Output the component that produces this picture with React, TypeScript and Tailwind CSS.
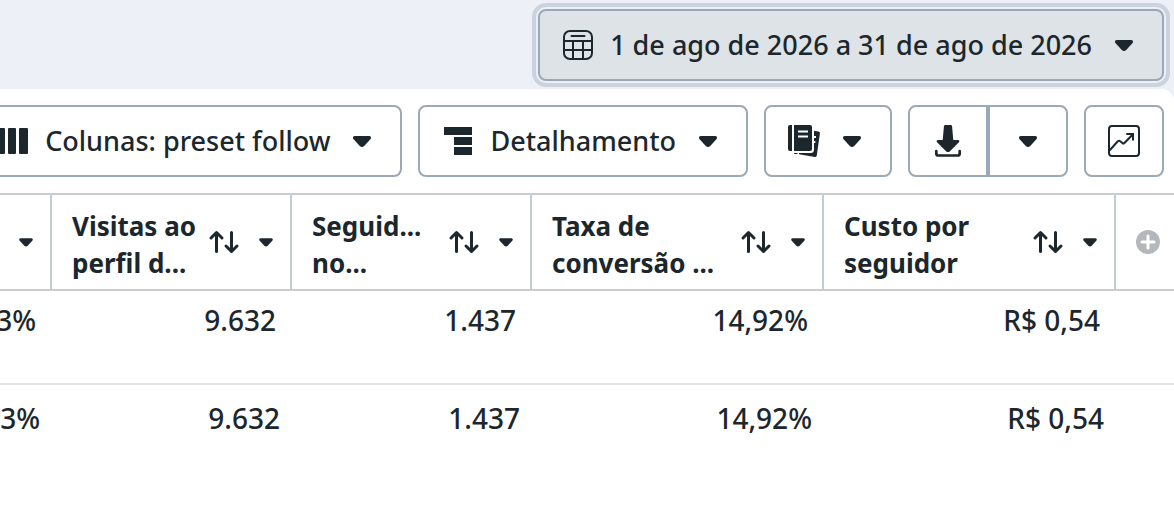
import React from 'react';
import clsx from 'clsx';

const Caret = ({ className = 'size-8' }: { className?: string }) => (
  <svg viewBox="0 0 32 32" fill="currentColor" className={clsx('shrink-0', className)} aria-hidden="true">
    <path d="M9 11h14c2 0 2.7 1.9 1.4 3.300l-6.200 6.600c-1.300 1.400-3.100 1.400-4.400 0l-6.200-6.600C6.300 12.900 7 11 9 11z" />
  </svg>
);

const CalendarIcon = () => (
  <svg viewBox="0 0 32 32" fill="none" stroke="currentColor" strokeWidth="2" className="size-8 shrink-0" aria-hidden="true">
    <rect x="2" y="2" width="28" height="28" rx="6" />
    <path d="M2 12h28M2 21h28M11 12v18M21 12v18" />
    <path d="M9.500 7h13" strokeLinecap="round" />
  </svg>
);

const ColumnsIcon = () => (
  <svg viewBox="0 0 32 32" fill="currentColor" className="size-8 shrink-0" aria-hidden="true">
    <rect x="0" y="3" width="8" height="26" rx="1" />
    <rect x="11" y="3" width="8" height="26" rx="1" />
    <rect x="22" y="3" width="9" height="26" rx="1" />
  </svg>
);

const BreakdownIcon = () => (
  <svg viewBox="0 0 32 32" fill="currentColor" className="size-8 shrink-0" aria-hidden="true">
    <path d="M2 2h28v8H2zM12 12h18v8H12zM12 22h18v8H12z" />
  </svg>
);

const ReportsIcon = () => (
  <svg viewBox="0 0 32 32" fill="currentColor" className="size-8 shrink-0" aria-hidden="true">
    <path d="M24 5.500l6.500 1.100a1.600 1.600 0 0 1 1.400 1.900L28.800 30.500a1.600 1.600 0 0 1-1.900 1.400L11 29.300V24z" />
    <path d="M0 0h26v24.500a3.500 3.500 0 0 1-3.500 3.500H0z" fill="#fff" />
    <path d="M25 12h3M25 17h2.300" stroke="#fff" strokeWidth="2" />
    <path d="M6 28.500h3.500" stroke="currentColor" strokeWidth="1" />
    <path d="M2 0h2v26H2a2 2 0 0 1-2-2V2a2 2 0 0 1 2-2z" />
    <path d="M6 0h16a2 2 0 0 1 2 2v22a2 2 0 0 1-2 2H6z" />
    <path d="M10 6.500h10M10 11.500h10" stroke="#fff" strokeWidth="2" />
  </svg>
);

const DownloadIcon = () => (
  <svg viewBox="0 0 32 32" fill="currentColor" className="size-8 shrink-0" aria-hidden="true">
    <path d="M13.500 0h5c1 0 1.500.5 1.600 1.500L21.300 15H26c1.400 0 1.800 1.200.9 2.200l-9.200 9.200c-1 .9-2.400.9-3.400 0l-9.200-9.200C4.200 16.200 4.600 15 6 15h4.700l1.200-13.500C12 .5 12.500 0 13.500 0z" />
    <path d="M4.300 26.200v2.300a2 2 0 0 0 2 2h19.400a2 2 0 0 0 2-2v-2.300" fill="none" stroke="currentColor" strokeWidth="2.700" strokeLinecap="round" />
  </svg>
);

const ChartIcon = () => (
  <svg viewBox="0 0 32 32" fill="none" stroke="currentColor" strokeWidth="2" className="size-8 shrink-0" aria-hidden="true">
    <rect x="1" y="1" width="30" height="30" rx="3" />
    <path d="M1.500 25.500L9.800 16.300a1.800 1.800 0 0 1 2.400-.1l2.200 1.900a1.500 1.500 0 0 0 2-.1L25 9.300M18.300 9H25v6.500" />
  </svg>
);

const SortIcon = () => (
  <svg viewBox="0 0 32 32" fill="none" stroke="currentColor" strokeWidth="3" strokeLinecap="round" strokeLinejoin="round" className="size-8 shrink-0" aria-hidden="true">
    <path d="M8.500 25.500v-19M3 12l5.500-5.500L14 12" />
    <path d="M23.500 6.500v19M18 20l5.500 5.500L29 20" />
  </svg>
);

const AddIcon = () => (
  <svg viewBox="0 0 24 24" className="size-6" aria-hidden="true">
    <circle cx="12" cy="12" r="12" fill="#b4b8bd" />
    <path d="M12 6v12M6 12h12" stroke="#fff" strokeWidth="3" strokeLinecap="round" />
  </svg>
);

const ToolbarButton = ({ className, ...props }: React.ButtonHTMLAttributes<HTMLButtonElement>) => (
  <button
    type="button"
    className={clsx(
      'flex h-18 shrink-0 items-center gap-4 whitespace-nowrap border-2 border-[#9ba8b5] px-[22px]',
      className
    )}
    {...props}
  />
);

const columns = [
  { lines: ['Visitas ao', 'perfil d...'] },
  { lines: ['Seguid...', 'no...'] },
  { lines: ['Taxa de', 'conversão ...'] },
  { lines: ['Custo por', 'seguidor'] },
];

const values = ['3%', '9.632', '1.437', '14,92%', 'R$ 0,54'];

const ValueCell = ({ value, className }: { value: string; className: string }) => (
  <td className="p-0 align-top">
    <div className={clsx('flex justify-end overflow-hidden whitespace-nowrap', className)}>{value}</div>
  </td>
);

const MetricsTable = () => (
  <table className="w-full table-fixed border-separate border-spacing-0">
    <colgroup>
      <col className="w-[52px]" />
      <col className="w-[240px]" />
      <col className="w-[240px]" />
      <col className="w-[292px]" />
      <col className="w-[292px]" />
      <col />
    </colgroup>
    <thead>
      <tr className="[&>th]:h-[98px] [&>th]:border-y-2 [&>th]:border-y-[#cccccc] [&>th]:p-0">
        <th className="border-r-2 border-r-[#c3ccd4]">
          <button type="button" aria-label="Opções da coluna" className="flex w-full justify-end pr-3">
            <Caret className="size-6" />
          </button>
        </th>
        {columns.map(({ lines }) => (
          <th key={lines[0]} scope="col" className="border-r-2 border-r-[#c3ccd4]">
            <div className="flex items-center pr-3 pl-5">
              <span className="flex-1 whitespace-nowrap pt-1.5 text-left text-[26px] leading-[37px] font-bold">
                {lines[0]}
                <br />
                {lines[1]}
              </span>
              <button type="button" aria-label="Ordenar">
                <SortIcon />
              </button>
              <button type="button" aria-label="Opções da coluna" className="ml-3.5">
                <Caret className="size-6" />
              </button>
            </div>
          </th>
        ))}
        <th>
          <button type="button" aria-label="Adicionar coluna" className="flex pl-5">
            <AddIcon />
          </button>
        </th>
      </tr>
    </thead>
    <tbody className="text-[28px] leading-[42px] font-medium">
      <tr className="[&>td]:h-[94px] [&>td]:border-b-2 [&>td]:border-[#e1e3e4]">
        {values.map((value) => (
          <ValueCell key={value} value={value} className="pt-2 pr-4" />
        ))}
        <td />
      </tr>
      <tr>
        {values.map((value) => (
          <ValueCell key={value} value={value} className="pt-3 pr-3" />
        ))}
        <td />
      </tr>
    </tbody>
  </table>
);

const App: React.FC = () => (
  <div className="flex min-h-screen flex-col overflow-hidden bg-[#edf0f6] font-['Noto_Sans',sans-serif] text-[27px] font-medium text-[#1c272d]">
    {/* Date range */}
    <div className="flex justify-end px-2.5 pt-[9px] pb-2">
      <ToolbarButton className="rounded-lg bg-[#dee3e7] outline-4 outline-offset-2 outline-[#ccd3dc]">
        <CalendarIcon />
        1 de ago de 2026 a 31 de ago de 2026
        <Caret />
      </ToolbarButton>
    </div>

    <main className="flex-1 rounded-tr-xl bg-white">
      {/* Toolbar */}
      <div className="flex justify-end gap-4 px-2.5 py-4">
        <ToolbarButton className="rounded-lg">
          <ColumnsIcon />
          Colunas: preset follow
          <Caret />
        </ToolbarButton>
        <ToolbarButton className="rounded-lg">
          <BreakdownIcon />
          Detalhamento
          <Caret />
        </ToolbarButton>
        <ToolbarButton className="rounded-lg" aria-label="Relatórios">
          <ReportsIcon />
          <Caret />
        </ToolbarButton>
        <div className="flex">
          <ToolbarButton className="rounded-l-lg" aria-label="Exportar">
            <DownloadIcon />
          </ToolbarButton>
          <ToolbarButton className="rounded-r-lg" aria-label="Opções de exportação">
            <Caret />
          </ToolbarButton>
        </div>
        <ToolbarButton className="rounded-lg" aria-label="Gráficos">
          <ChartIcon />
        </ToolbarButton>
      </div>

      <MetricsTable />
    </main>
  </div>
);

export default App;
